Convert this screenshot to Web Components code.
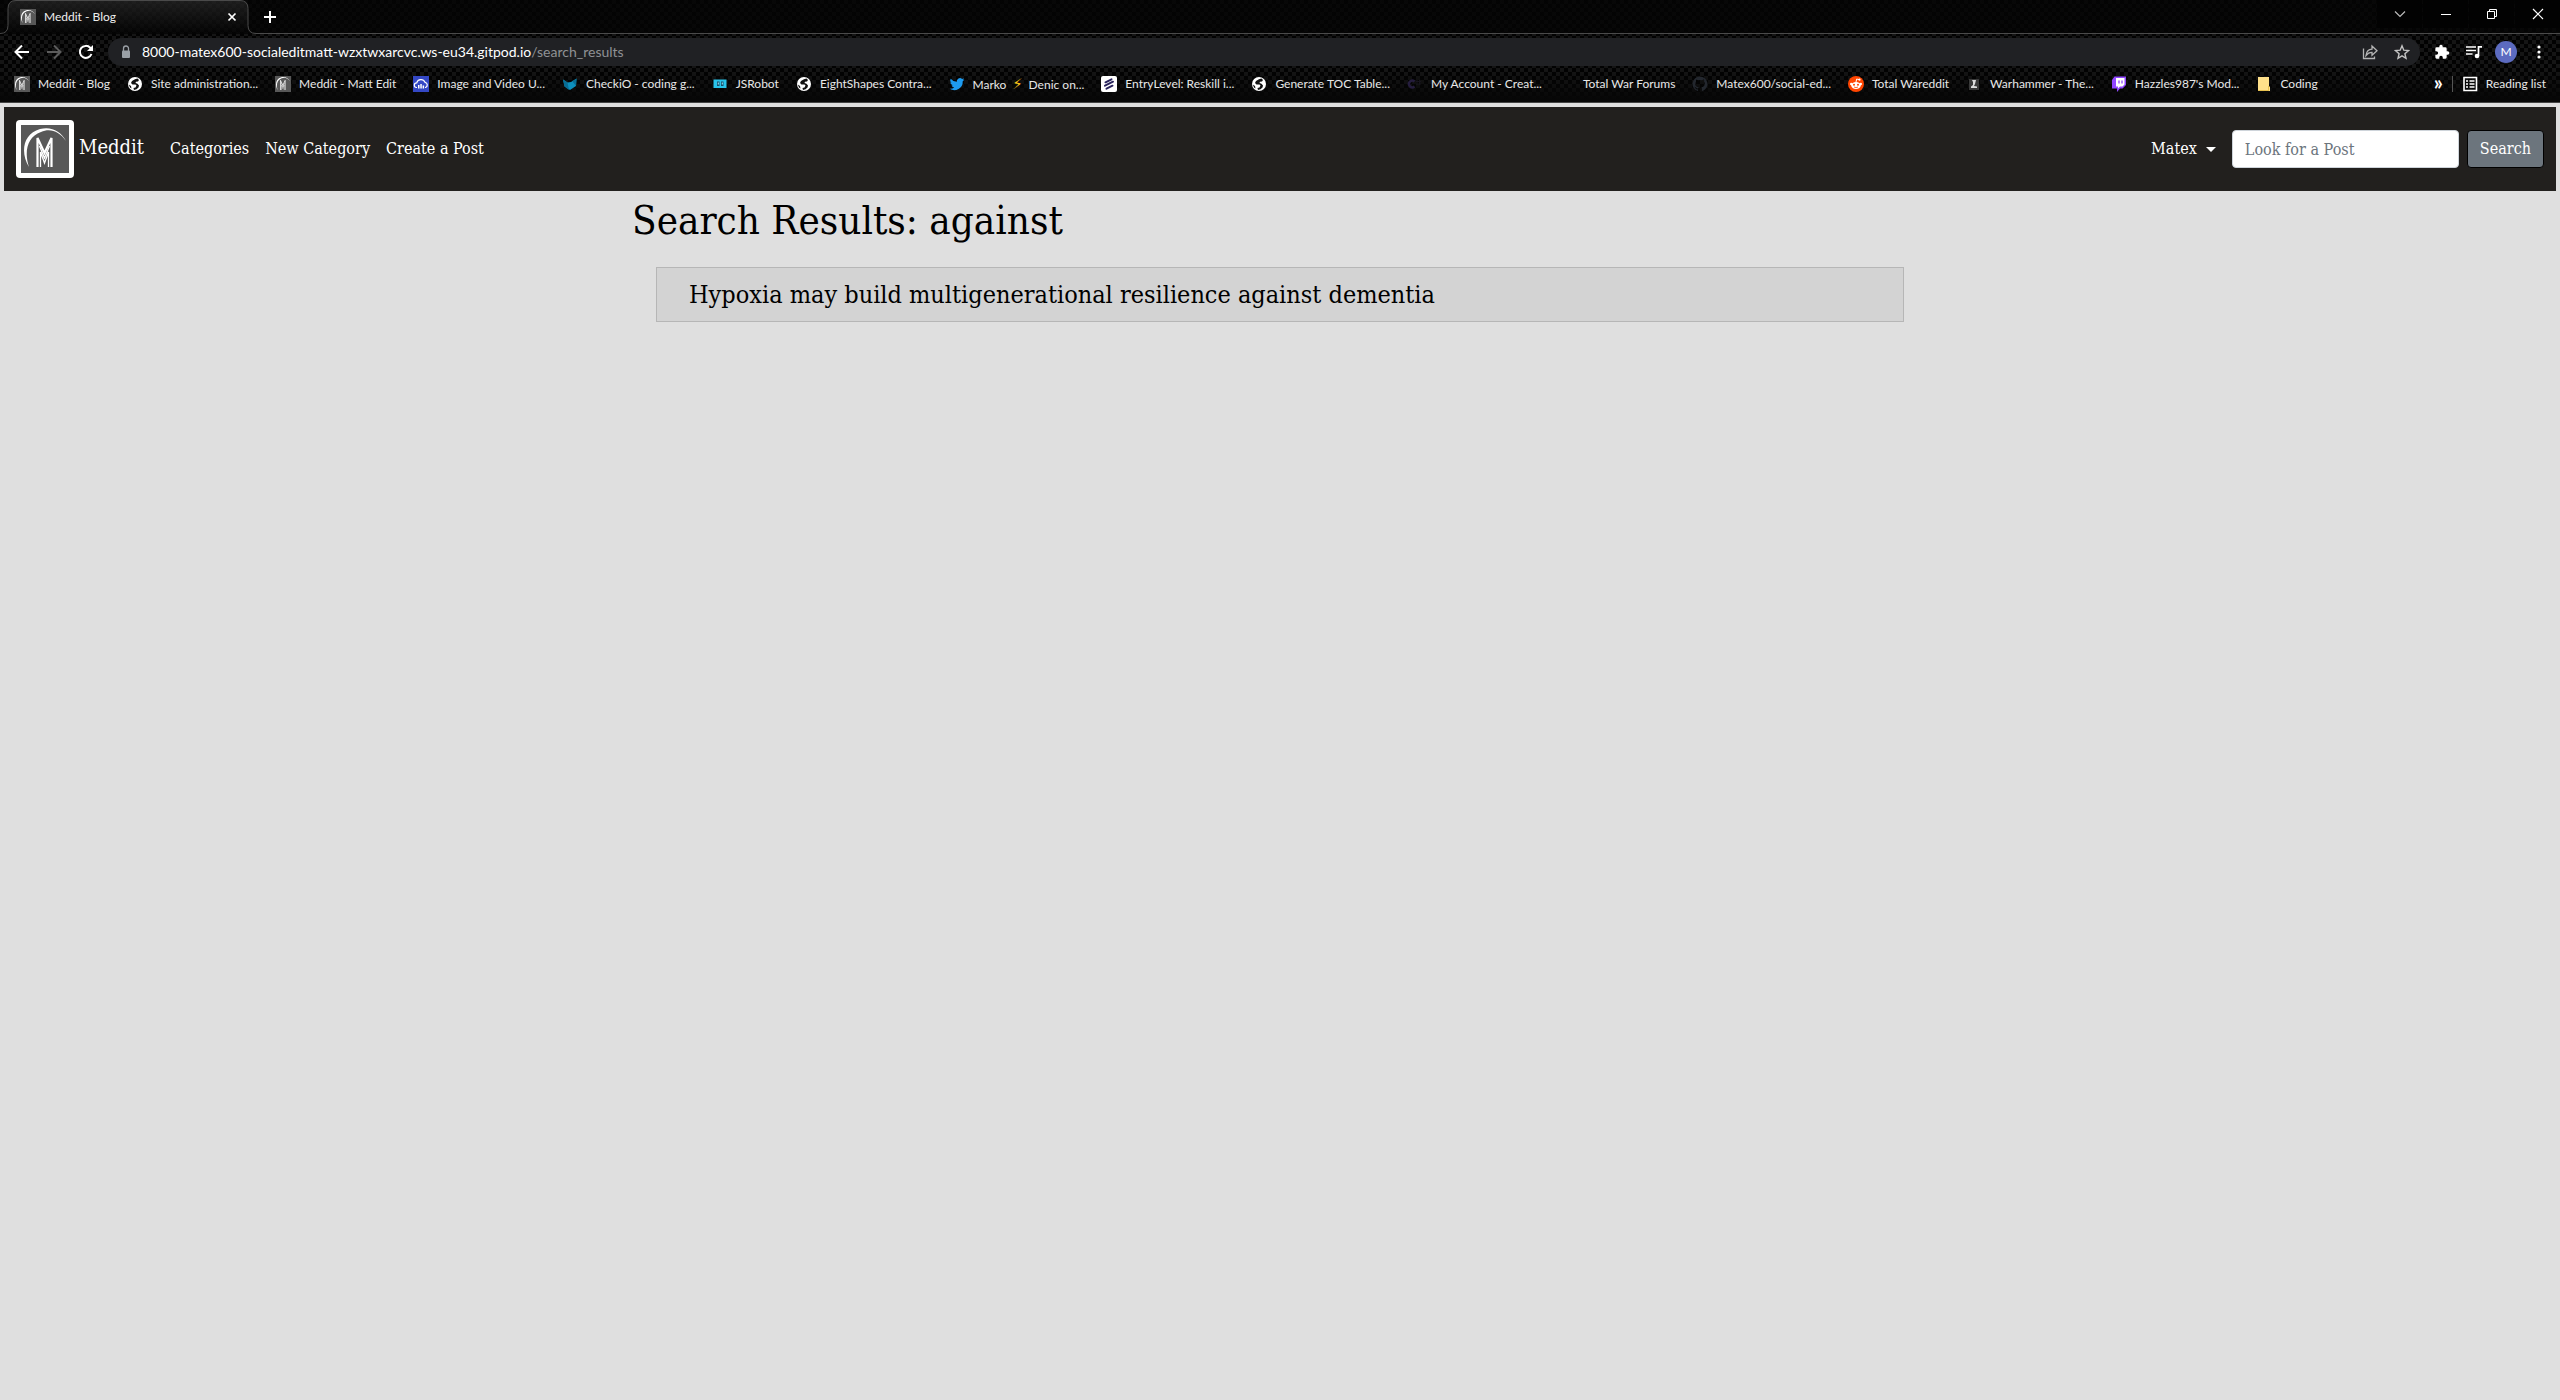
<!DOCTYPE html>
<html lang="en">
<head>
<meta charset="utf-8">
<title>Meddit - Blog</title>
<style>
  html, body { margin: 0; min-height: 100%; }
  body {
    display: flex; flex-direction: column; min-height: 100vh;
    background: #dfdfdf; color: #000;
    font: 16px/24px "DejaVu Serif Condensed", "DejaVu Serif", serif;
  }
</style>
</head>
<body>
<browser-chrome></browser-chrome>
<meddit-nav></meddit-nav>
<search-results term="against">
  <result-card>Hypoxia may build multigenerational resilience against dementia</result-card>
</search-results>

<script>
const define = (name, markup, setup) => customElements.define(name, class extends HTMLElement {
  constructor() {
    super();
    this.attachShadow({ mode: 'open' }).innerHTML = markup;
  }
  connectedCallback() { if (setup) setup(this, this.shadowRoot); }
});

const mark = `<rect width="48" height="48" fill="#585858"/>
  <path d="M8 42C-1 27 2 9 19 4c11-3 21 2 26 12C38 6 29 3 20 7 6 12 3 27 8 42Z" fill="#fff"/>
  <path d="M16.500 42V13l7 15 7-15v29" fill="none" stroke="#fff" stroke-width="2.200"/>
  <path d="M19.500 42V27l4 11 4-11v15M18.500 21l5 12 5-12" fill="none" stroke="#fff" stroke-width="1.300"/>`;
const globe = `<circle cx="8" cy="8" r="7" fill="#fff"/><path d="M10.500 2.500 8 3.300 5 5 4 7 5.500 8.500h3L9.500 9.500 8.500 11.500 6.500 12 7 14 9.500 13.300 11.500 11.500 12 9.500 10.500 7.800 8.500 7 9 5.800 11 5.500 12 4Z M1.800 8.500 4 10 4.500 12.500 3 11.500Z" fill="#111"/>`;

/* Small pictures, each with its view box */
const icons = {
  meddit: ['0 0 48 48', mark],
  globe: ['0 0 16 16', globe],
  cloud: ['0 0 16 16', `<rect width="16" height="16" fill="#3448c5"/><path d="M4 11.500H3.500a2.300 2.300 0 0 1 .2-4.600 4.400 4.400 0 0 1 8.300-.6 2.700 2.700 0 0 1 .5 5.200H12" fill="none" stroke="#fff" stroke-width="1.200"/><path d="M5 9h1.500v3.500H5ZM7.300 8h1.500v4.500H7.300ZM9.600 9.500h1.500v3H9.600Z" fill="#fff"/>`],
  checkio: ['0 0 16 16', `<path d="M1 3.500 5.500 6.500 9 6l5.500-3.500L14 10l-6 4-5.500-3.500Z" fill="#0d8fbd"/><path d="m1 3.500 4.500 3L7 14 2.500 10.500ZM14.500 2.500 14 10l-3.500-4.500Z" fill="#086d94"/>`],
  robot: ['0 0 16 16', `<rect x="1.500" y="3.500" width="13" height="8.500" fill="#29c3ea"/><path d="M5 5.500h2.500V10H5ZM9 5.500h2.500V10H9Z" fill="#14506b"/><path d="M5.800 6.500h1v2h-1ZM9.800 6.500h1v2h-1Z" fill="#9be9ff"/>`],
  twitter: ['0 0 24 24', `<path d="M23 5.200a9 9 0 0 1-2.500.8 4.500 4.500 0 0 0 1.900-2.500 9 9 0 0 1-2.800 1.100 4.500 4.500 0 0 0-7.700 4.100A12.700 12.700 0 0 1 2.600 4a4.500 4.500 0 0 0 1.400 6 4.500 4.500 0 0 1-2-.6 4.500 4.500 0 0 0 3.600 4.500 4.500 4.500 0 0 1-2 .1 4.500 4.500 0 0 0 4.200 3.100A9 9 0 0 1 1 19a12.700 12.700 0 0 0 19.600-11.300A9 9 0 0 0 23 5.200Z" fill="#1d9bf0"/>`],
  entry: ['0 0 16 16', `<rect width="16" height="16" rx="2" fill="#fff"/><path d="m4.500 6.300 6-3M4 9.700l8-4M5.500 12.700l6-3" stroke="#29235c" stroke-width="2" stroke-linecap="round"/>`],
  cplus: ['0 0 16 16', `<path d="M7.500 5.500A3.300 3.300 0 1 0 7.500 10.500" fill="none" stroke="#251d3d" stroke-width="2.500"/><path d="M10 4v5M12.500 4v5M9 5.500h5M9 8h5" stroke="#17141d"/>`],
  blank: ['0 0 16 16', ''],
  github: ['0 0 16 16', `<path d="M8 .5a7.500 7.500 0 0 0-2.400 14.600c.4.1.5-.2.5-.4v-1.400c-2.100.5-2.500-.9-2.500-.9-.3-.9-.8-1.100-.8-1.100-.7-.5 0-.5 0-.5.8.1 1.200.8 1.200.8.700 1.100 1.800.8 2.200.6.100-.5.300-.8.500-1-1.700-.2-3.400-.8-3.400-3.700 0-.8.3-1.500.8-2-.1-.2-.3-1 .1-2 0 0 .6-.2 2 .8a7 7 0 0 1 3.700 0c1.400-1 2-.8 2-.8.4 1 .2 1.800.1 2 .5.5.8 1.200.8 2 0 2.900-1.800 3.500-3.400 3.700.3.200.5.700.5 1.400v2.100c0 .2.100.5.500.4A7.500 7.500 0 0 0 8 .5Z" fill="#23272e"/>`],
  reddit: ['0 0 16 16', `<circle cx="8" cy="8" r="8" fill="#ff4500"/><ellipse cx="8" cy="9.500" rx="4.800" ry="3.500" fill="#fff"/><circle cx="3.300" cy="8" r="1.300" fill="#fff"/><circle cx="12.700" cy="8" r="1.300" fill="#fff"/><path d="M8 6l.7-3 2.300.6" fill="none" stroke="#fff"/><circle cx="11.500" cy="3.700" r="1.100" fill="#fff"/><circle cx="6" cy="8.800" r="1" fill="#ff4500"/><circle cx="10" cy="8.800" r="1" fill="#ff4500"/><path d="M6 11q2 1.200 4 0" fill="none" stroke="#ff4500" stroke-width=".8"/>`],
  warhammer: ['0 0 16 16', `<rect x="3" y="3" width="10" height="11" fill="#3a3a3a"/><path d="M6 4h4L9 8l-1 2 3 .5V12H5v-1.500L7 9V6Z" fill="#ddd"/>`],
  twitch: ['0 0 16 16', `<path d="M3.500.5H15V9l-3.500 3.500H9L6 16v-3.500H1V4Z" fill="#9146ff"/><path d="M5 2h8.500v6.500l-2 2H9l-2 2v-2H5Z" fill="#fff"/><path d="M8 4.500v3M11 4.500v3" stroke="#9146ff" stroke-width="1.300"/>`],
  folder: ['0 0 16 16', `<path d="M2 1h11v9l1 1v4H2Z" fill="#ffe08a"/><path d="M2 14.500h11M12.500 10v4.500" stroke="#e8c14f"/>`],
  list: ['0 0 16 16', `<path d="M2 1.500h12.500v13H2Z" fill="none" stroke="#fff" stroke-width="1.600"/><path d="M4 5h2M4 8h2M4 11h2M7.500 5h5M7.500 8h5M7.500 11h5" stroke="#fff" stroke-width="1.500"/>`],
  back: ['0 0 16 16', `<path d="M15 8H2M8 1.500 1.500 8 8 14.500" fill="none" stroke="#fff" stroke-width="2"/>`],
  forward: ['0 0 16 16', `<path d="M1 8h13M8 1.500 14.500 8 8 14.500" fill="none" stroke="#5c5c5c" stroke-width="2"/>`],
  reload: ['0 0 16 16', `<path d="M13.500 10a6 6 0 1 1-1.300-6.300L14 5.500" fill="none" stroke="#fff" stroke-width="2"/><path d="M15 1v6H9Z" fill="#fff"/>`],
  lock: ['0 0 16 16', `<rect x="4" y="6.500" width="8" height="7.500" rx="1" fill="#9aa0a6"/><path d="M5.500 7V4.500a2.500 2.500 0 0 1 5 0V7" fill="none" stroke="#9aa0a6" stroke-width="1.300"/>`],
  share: ['0 0 16 16', `<path d="M1.500 4.500v10h11v-2" fill="none" stroke="#b4b4b4" stroke-width="1.300"/><path d="M4 11.500C4.500 7.500 7 5.300 10 5.200V2l5 4.700-5 4.500V8.300C7.500 8.200 5.500 9.500 4 11.500Z" fill="none" stroke="#b4b4b4" stroke-width="1.300"/>`],
  star: ['0 0 16 16', `<path d="m8 1.800 1.800 4.400 4.700.4-3.600 3.100 1.100 4.600L8 11.800l-4 2.500 1.100-4.600L1.500 6.600l4.700-.4Z" fill="none" stroke="#c3c3c3" stroke-width="1.400"/>`],
  puzzle: ['0 0 24 24', `<path d="M20.500 11H19V7a2 2 0 0 0-2-2h-4V3.500a2.500 2.500 0 0 0-5 0V5H4a2 2 0 0 0-2 2v3.800h1.500a2.700 2.700 0 0 1 0 5.400H2V20a2 2 0 0 0 2 2h3.800v-1.500a2.700 2.700 0 0 1 5.400 0V22H17a2 2 0 0 0 2-2v-4h1.500a2.500 2.500 0 0 0 0-5Z" fill="#fff"/>`],
  music: ['0 0 16 16', `<path d="M0 3h10M0 6.500h10M0 10h6.500" stroke="#fff" stroke-width="1.700"/><path d="M12.500 12V2.800H16" fill="none" stroke="#fff" stroke-width="1.700"/><circle cx="11" cy="12" r="2.300" fill="#fff"/>`],
  dots: ['0 0 16 16', `<g fill="#fff"><circle cx="8" cy="3" r="1.600"/><circle cx="8" cy="8" r="1.600"/><circle cx="8" cy="13" r="1.600"/></g>`],
  close: ['0 0 16 16', `<path d="m4.500 4.500 7 7m0-7-7 7" stroke="#fff" stroke-width="1.700"/>`],
  plus: ['0 0 16 16', `<path d="M8 2v12M2 8h12" stroke="#fff" stroke-width="2"/>`],
  caret: ['0 0 16 16', `<path d="m3 5.500 5 5 5-5" fill="none" stroke="#bbb" stroke-width="1.200"/>`],
  minimize: ['0 0 16 16', `<path d="M3 8.500h10" stroke="#fff"/>`],
  restore: ['0 0 16 16', `<path d="M3.500 5.500h7v7h-7ZM5.500 5.500v-2h7v7h-2" fill="none" stroke="#fff"/>`],
  exit: ['0 0 16 16', `<path d="m3 3 10 10M13 3 3 13" stroke="#fff" stroke-width="1.200"/>`],
};

define('ui-icon', `
  <style>
    :host { display: block; flex: none; width: var(--icon-size, 16px); height: var(--icon-size, 16px); }
    svg { display: block; width: 100%; height: 100%; }
  </style><svg aria-hidden="true"></svg>`,
  (el, root) => {
    const [box, shapes] = icons[el.getAttribute('name')];
    const svg = root.querySelector('svg');
    svg.setAttribute('viewBox', box);
    svg.innerHTML = shapes;
  });

define('icon-button', `
  <style>
    :host { display: block; flex: none; }
    button { display: grid; place-items: center; width: 100%; height: 100%; padding: 0; border: 0; background: none; }
  </style>
  <button type="button"></button>`,
  (el, root) => {
    const button = root.querySelector('button');
    button.setAttribute('aria-label', el.getAttribute('label'));
    button.innerHTML = `<ui-icon name="${el.getAttribute('name')}"></ui-icon>`;
  });

define('bookmark-link', `
  <style>
    :host { display: block; flex: none; }
    a { display: flex; align-items: center; gap: 8px; color: #e8e8e8; text-decoration: none; white-space: nowrap; }
  </style>
  <a href="#"><span class="icon"></span><span><slot></slot></span></a>`,
  (el, root) => { root.querySelector('.icon').innerHTML = `<ui-icon name="${el.getAttribute('icon')}"></ui-icon>`; });

define('browser-tab', `
  <style>
    :host { display: flex; position: relative; flex: none; width: 256px; height: 34px; }
    .outline { position: absolute; inset: 0; width: 256px; height: 34px; }
    .body { position: relative; flex: 1; display: flex; align-items: center; gap: 8px; padding: 0 16px 0 20px; color: #eee; }
    .title { flex: 1; }
  </style>
  <svg class="outline" viewBox="0 0 256 34" aria-hidden="true">
    <defs><linearGradient id="g" x1="0" y1="0" x2="0" y2="1"><stop offset="0" stop-color="#fff" stop-opacity=".1"/><stop offset="1" stop-color="#fff" stop-opacity="0"/></linearGradient></defs>
    <path d="M0 33.500q8 0 8-8v-17q0-8 8-8h224q8 0 8 8v17q0 8 8 8" fill="url(#g)" stroke="#4a4a4a"/>
  </svg>
  <div class="body"><ui-icon name="meddit"></ui-icon><span class="title"><slot></slot></span><icon-button name="close" label="Close tab"></icon-button></div>`);

define('browser-chrome', `
  <style>
    :host {
      display: block; flex: none; box-sizing: border-box; height: 103px; overflow: hidden;
      border-bottom: 1px solid #444; color: #e8e8e8;
      font: 12px/16px Lato, "Open Sans", sans-serif;
      background:
        linear-gradient(#0000 34px, #0000 70px, #070707 100px),
        linear-gradient(#040404cc 34px, #0000 34px),
        repeating-conic-gradient(#151515 0 25%, #020202 0 50%) 0 0 / 8px 8px;
    }
    .strip { display: flex; height: 34px; }
    .rest { flex: 1; display: flex; justify-content: space-between; box-sizing: border-box; border-bottom: 1px solid #4a4a4a; }
    .new { width: 28px; height: 33px; }
    .window { display: flex; height: 28px; gap: 1px; }
    .window icon-button { width: 45px; background: #020202; }
    .toolbar { display: flex; align-items: center; height: 36px; padding: 0 5px 0 6px; }
    .toolbar > icon-button { width: 32px; height: 32px; }
    .address { flex: 1; display: flex; align-items: center; gap: 8px; height: 28px; box-sizing: border-box; margin: 0 6px; padding: 0 2px 0 10px; border-radius: 14px; background: #202124; }
    .url { flex: 1; font-size: 14px; line-height: 20px; color: #8f9194; }
    .url b { font-weight: 400; color: #fff; }
    .actions { display: flex; }
    .actions icon-button { width: 32px; height: 28px; }
    .avatar { display: grid; place-items: center; width: 22px; height: 22px; margin: 0 6px 0 5px; padding: 0; border: 0; border-radius: 50%; background: #5c6bc0; color: #fff; font: inherit; }
    .bookmarks { display: flex; align-items: center; gap: 17px; height: 28px; padding: 0 14px; }
    .bolt { display: inline-block; width: 16px; text-align: center; color: #fcc419; font: 15px/16px "DejaVu Sans", sans-serif; }
    .end { display: flex; align-items: center; gap: 9px; margin-left: auto; }
    .more { padding: 0 0 4px; border: 0; background: none; color: #fff; font: bold 20px/16px Lato, sans-serif; }
    .rule { width: 1px; height: 16px; background: #555; }
  </style>
  <div class="strip">
    <browser-tab>Meddit - Blog</browser-tab>
    <div class="rest">
      <icon-button class="new" name="plus" label="New tab"></icon-button>
      <div class="window">
        <icon-button name="caret" label="Search tabs"></icon-button>
        <icon-button name="minimize" label="Minimize"></icon-button>
        <icon-button name="restore" label="Restore"></icon-button>
        <icon-button name="exit" label="Close"></icon-button>
      </div>
    </div>
  </div>
  <div class="toolbar">
    <icon-button name="back" label="Back"></icon-button>
    <icon-button name="forward" label="Forward"></icon-button>
    <icon-button name="reload" label="Reload"></icon-button>
    <div class="address">
      <ui-icon name="lock"></ui-icon>
      <span class="url"><b>8000-matex600-socialeditmatt-wzxtwxarcvc.ws-eu34.gitpod.io</b>/search_results</span>
      <div class="actions">
        <icon-button name="share" label="Share"></icon-button>
        <icon-button name="star" label="Bookmark"></icon-button>
      </div>
    </div>
    <icon-button name="puzzle" label="Extensions"></icon-button>
    <icon-button name="music" label="Media"></icon-button>
    <button class="avatar" type="button">M</button>
    <icon-button name="dots" label="Menu"></icon-button>
  </div>
  <nav class="bookmarks" aria-label="Bookmarks">
    <bookmark-link icon="meddit">Meddit - Blog</bookmark-link>
    <bookmark-link icon="globe">Site administration...</bookmark-link>
    <bookmark-link icon="meddit">Meddit - Matt Edit</bookmark-link>
    <bookmark-link icon="cloud">Image and Video U...</bookmark-link>
    <bookmark-link icon="checkio">CheckiO - coding g...</bookmark-link>
    <bookmark-link icon="robot">JSRobot</bookmark-link>
    <bookmark-link icon="globe">EightShapes Contra...</bookmark-link>
    <bookmark-link icon="twitter">Marko <span class="bolt">⚡</span> Denic on...</bookmark-link>
    <bookmark-link icon="entry">EntryLevel: Reskill i...</bookmark-link>
    <bookmark-link icon="globe">Generate TOC Table...</bookmark-link>
    <bookmark-link icon="cplus">My Account - Creat...</bookmark-link>
    <bookmark-link icon="blank">Total War Forums</bookmark-link>
    <bookmark-link icon="github">Matex600/social-ed...</bookmark-link>
    <bookmark-link icon="reddit">Total Wareddit</bookmark-link>
    <bookmark-link icon="warhammer">Warhammer - The...</bookmark-link>
    <bookmark-link icon="twitch">Hazzles987's Mod...</bookmark-link>
    <bookmark-link icon="folder">Coding</bookmark-link>
    <div class="end">
      <button class="more" type="button" aria-label="More bookmarks">»</button>
      <span class="rule"></span>
      <bookmark-link icon="list">Reading list</bookmark-link>
    </div>
  </nav>`);

define('meddit-nav', `
  <style>
    :host { display: block; flex: none; margin: 4px 4px 0; background: #22201e; color: #fff; }
    nav { display: flex; align-items: center; min-height: 84px; box-sizing: border-box; padding: 8px 12px; }
    a { color: inherit; text-decoration: none; }
    .brand { display: flex; align-items: center; gap: 5px; margin-right: 18px; font-size: 20px; line-height: 30px; }
    .brand span { padding-bottom: 4px; }
    .logo { padding: 5px; border-radius: 4px; background: #fff; --icon-size: 48px; }
    ul { display: flex; flex: 1; margin: 0; padding: 0; list-style: none; }
    li a { display: block; padding: 8px; }
    .user { display: flex; align-items: center; gap: 9px; padding: 8px; margin-right: 8px; border: 0; background: none; color: inherit; font: inherit; }
    .user::after { content: ""; border: 5px solid #0000; border-top-color: #fff; border-bottom: 0; }
    form { display: flex; gap: 8px; }
    input { width: 227px; height: 38px; box-sizing: border-box; padding: 6px 12px; border: 1px solid #ced4da; border-radius: 4px; background: #fff; font: inherit; }
    input::placeholder { color: #6c757d; opacity: 1; }
    form button { height: 38px; box-sizing: border-box; padding: 6px 12px; border: 1px solid #000; border-radius: 4px; background: #6c757d; color: #fff; font: inherit; }
  </style>
  <nav>
    <a class="brand" href="#"><ui-icon class="logo" name="meddit"></ui-icon><span>Meddit</span></a>
    <ul>
      <li><a href="#categories">Categories</a></li>
      <li><a href="#new">New Category</a></li>
      <li><a href="#create">Create a Post</a></li>
    </ul>
    <button class="user" type="button">Matex</button>
    <form role="search">
      <input type="search" aria-label="Look for a Post" placeholder="Look for a Post">
      <button type="button">Search</button>
    </form>
  </nav>`);

define('search-results', `
  <style>
    :host { display: block; box-sizing: border-box; width: 100%; max-width: 1320px; margin: 0 auto; padding: 5px 12px; }
    h1 { margin: 0 0 23px; font-size: 40px; line-height: 48px; font-weight: 400; }
    section { padding: 0 24px; }
  </style>
  <h1>Search Results: <span></span></h1>
  <section><slot></slot></section>`,
  (el, root) => { root.querySelector('span').textContent = el.getAttribute('term'); });

define('result-card', `
  <style>
    :host { display: block; padding: 11px 32px; border: 1px solid #b6b6b6; background: #d3d3d3; }
    h2 { margin: 0; font-size: 25px; line-height: 31px; font-weight: 400; }
    a { color: #000; text-decoration: none; }
  </style>
  <h2><a href="#post"><slot></slot></a></h2>`);
</script>
</body>
</html>
